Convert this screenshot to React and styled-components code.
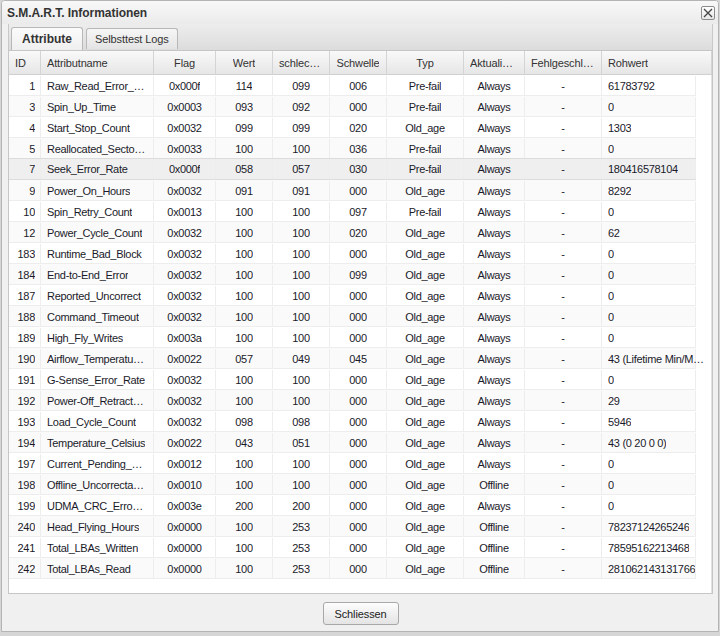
import React from "react";
import styled, { createGlobalStyle } from "styled-components";

const Global = createGlobalStyle`
  html, body { margin: 0; padding: 0; background: #d6d6d6; }
  body { font-family: "Liberation Sans", Arial, sans-serif; font-size: 11px; color: #222; }
  * { box-sizing: border-box; }
`;

const Window = styled.div`
  margin-left: 1px;
  width: 718px;
  height: 632px;
  border: 1px solid #b4b4b4;
  border-radius: 4px 4px 0 0;
  background: #f0f0f0;
  display: flex;
  flex-direction: column;
  overflow: hidden;
`;

const TitleBar = styled.div`
  height: 23px;
  flex: none;
  display: flex;
  align-items: center;
  justify-content: space-between;
  padding: 0 3px 0 5px;
  background: linear-gradient(#f8f8f8, #ebebeb);
`;

const Title = styled.div`
  font-weight: bold;
  font-size: 12px;
  color: #333;
  letter-spacing: -0.05px;
`;

const CloseBtn = styled.div`
  width: 14px;
  height: 14px;
  border: 1px solid #8c8c8c;
  border-radius: 2px;
  background: linear-gradient(#ffffff, #e6e6e6);
  display: flex;
  align-items: center;
  justify-content: center;
`;

const Body = styled.div`
  flex: 1;
  display: flex;
  flex-direction: column;
  padding: 0 5px 0 6px;
`;

const TabStrip = styled.div`
  height: 26px;
  flex: none;
  display: flex;
  align-items: flex-end;
  gap: 3px;
  padding-left: 2px;
  background: linear-gradient(#ededed, #dcdcdc);
  border-left: 1px solid #c8c8c8;
  border-right: 1px solid #c8c8c8;
`;

const Tab = styled.div`
  height: ${(p) => (p.$active ? "23px" : "21px")};
  margin-bottom: ${(p) => (p.$active ? "0" : "1px")};
  padding: 0 ${(p) => (p.$active ? "10px" : "8px")};
  display: flex;
  align-items: center;
  font-size: ${(p) => (p.$active ? "12px" : "11px")};
  font-weight: ${(p) => (p.$active ? "bold" : "normal")};
  letter-spacing: ${(p) => (p.$active ? "0" : "-0.1px")};
  color: #333;
  border: 1px solid #b8b8b8;
  border-bottom: none;
  border-radius: 3px 3px 0 0;
  background: ${(p) =>
    p.$active ? "linear-gradient(#fbfbfb, #efefef)" : "linear-gradient(#f6f6f6, #e4e4e4)"};
`;

const Panel = styled.div`
  height: 544px;
  flex: none;
  border: 1px solid #c6c6c6;
  background: #fff;
  display: flex;
  flex-direction: column;
`;

const cols = [
  { key: "id", w: 32, align: "right", hAlign: "left" },
  { key: "name", w: 113, align: "left", hAlign: "left", padR: 7 },
  { key: "flag", w: 62, align: "center", hAlign: "center" },
  { key: "wert", w: 57, align: "center", hAlign: "center" },
  { key: "schlecht", w: 57, align: "center", hAlign: "center" },
  { key: "schwelle", w: 57, align: "center", hAlign: "center" },
  { key: "typ", w: 77, align: "center", hAlign: "center" },
  { key: "akt", w: 61, align: "center", hAlign: "center" },
  { key: "fehl", w: 77, align: "center", hAlign: "center" },
  { key: "roh", w: 94, align: "left", hAlign: "left", overflow: true },
];

const headers = [
  "ID",
  "Attributname",
  "Flag",
  "Wert",
  "schlechtester",
  "Schwelle",
  "Typ",
  "Aktualisiert",
  "Fehlgeschlagen",
  "Rohwert",
];

const HeaderRow = styled.div`
  display: flex;
  height: 24px;
  flex: none;
  background: linear-gradient(#f9f9f9, #e6e6e6);
  border-bottom: 1px solid #d0d0d0;
`;

const HeaderCell = styled.div`
  width: ${(p) => p.$w}px;
  flex: ${(p) => (p.$grow ? "1" : "none")};
  padding: 0 6px;
  display: flex;
  align-items: center;
  justify-content: ${(p) => (p.$align === "center" ? "center" : "flex-start")};
  border-right: 1px solid #d4d4d4;
  color: #333;
  letter-spacing: -0.15px;
  white-space: nowrap;
  overflow: hidden;
`;

const HeaderText = styled.span`
  overflow: hidden;
  text-overflow: ellipsis;
  white-space: nowrap;
`;

const BodyArea = styled.div`
  flex: 1;
  display: flex;
`;

const Rows = styled.div`
  width: 687px;
  flex: none;
`;

const Gutter = styled.div`
  flex: 1;
  border-right: 1px solid #e2e2e2;
`;

const Row = styled.div`
  display: flex;
  background: ${(p) => (p.$hover ? "#efefef" : p.$alt ? "#fafafa" : "#fff")};
  border-top: 1px solid ${(p) => (p.$hover ? "#dcdcdc" : "transparent")};
  border-bottom: 1px solid ${(p) => (p.$hover ? "#dcdcdc" : "#ededed")};
  margin-top: ${(p) => (p.$hover ? "-1px" : "0")};
  height: ${(p) => (p.$hover ? "22px" : "21px")};
`;

const Cell = styled.div`
  width: ${(p) => p.$w}px;
  flex: none;
  padding-left: ${(p) => (p.$align === "right" ? "0" : "6px")};
  padding-right: ${(p) =>
    p.$overflow ? "0" : p.$padR ? `${p.$padR}px` : p.$align === "right" ? "5px" : "6px"};
  display: flex;
  align-items: center;
  justify-content: ${(p) =>
    p.$align === "center" ? "center" : p.$align === "right" ? "flex-end" : "flex-start"};
  border-right: 1px solid #ededed;
  color: #1a1a2a;
  letter-spacing: -0.3px;
  overflow: ${(p) => (p.$overflow ? "visible" : "hidden")};
`;

const CellText = styled.span`
  overflow: hidden;
  text-overflow: ellipsis;
  white-space: nowrap;
`;

const RohText = styled.span`
  flex: none;
  white-space: nowrap;
  overflow: hidden;
  text-overflow: ellipsis;
  max-width: ${(p) => (p.$long ? "97px" : "none")};
`;

const Footer = styled.div`
  flex: 1;
  display: flex;
  justify-content: center;
  align-items: flex-start;
  padding-top: 8px;
`;

const Button = styled.button`
  width: 76px;
  height: 23px;
  border: 1px solid #a8a8a8;
  border-radius: 3px;
  background: linear-gradient(#fdfdfd, #e4e4e4);
  font-family: "Liberation Sans", Arial, sans-serif;
  font-size: 11px;
  letter-spacing: -0.1px;
  color: #222;
  padding: 0;
`;

const data = [
  ["1", "Raw_Read_Error_Rate", "0x000f", "114", "099", "006", "Pre-fail", "Always", "-", "61783792"],
  ["3", "Spin_Up_Time", "0x0003", "093", "092", "000", "Pre-fail", "Always", "-", "0"],
  ["4", "Start_Stop_Count", "0x0032", "099", "099", "020", "Old_age", "Always", "-", "1303"],
  ["5", "Reallocated_Sector_Ct", "0x0033", "100", "100", "036", "Pre-fail", "Always", "-", "0"],
  ["7", "Seek_Error_Rate", "0x000f", "058", "057", "030", "Pre-fail", "Always", "-", "180416578104"],
  ["9", "Power_On_Hours", "0x0032", "091", "091", "000", "Old_age", "Always", "-", "8292"],
  ["10", "Spin_Retry_Count", "0x0013", "100", "100", "097", "Pre-fail", "Always", "-", "0"],
  ["12", "Power_Cycle_Count", "0x0032", "100", "100", "020", "Old_age", "Always", "-", "62"],
  ["183", "Runtime_Bad_Block", "0x0032", "100", "100", "000", "Old_age", "Always", "-", "0"],
  ["184", "End-to-End_Error", "0x0032", "100", "100", "099", "Old_age", "Always", "-", "0"],
  ["187", "Reported_Uncorrect", "0x0032", "100", "100", "000", "Old_age", "Always", "-", "0"],
  ["188", "Command_Timeout", "0x0032", "100", "100", "000", "Old_age", "Always", "-", "0"],
  ["189", "High_Fly_Writes", "0x003a", "100", "100", "000", "Old_age", "Always", "-", "0"],
  ["190", "Airflow_Temperature_Cel", "0x0022", "057", "049", "045", "Old_age", "Always", "-", "43 (Lifetime Min/Max 20/43)"],
  ["191", "G-Sense_Error_Rate", "0x0032", "100", "100", "000", "Old_age", "Always", "-", "0"],
  ["192", "Power-Off_Retract_Count", "0x0032", "100", "100", "000", "Old_age", "Always", "-", "29"],
  ["193", "Load_Cycle_Count", "0x0032", "098", "098", "000", "Old_age", "Always", "-", "5946"],
  ["194", "Temperature_Celsius", "0x0022", "043", "051", "000", "Old_age", "Always", "-", "43 (0 20 0 0)"],
  ["197", "Current_Pending_Sector", "0x0012", "100", "100", "000", "Old_age", "Always", "-", "0"],
  ["198", "Offline_Uncorrectable", "0x0010", "100", "100", "000", "Old_age", "Offline", "-", "0"],
  ["199", "UDMA_CRC_Error_Count", "0x003e", "200", "200", "000", "Old_age", "Always", "-", "0"],
  ["240", "Head_Flying_Hours", "0x0000", "100", "253", "000", "Old_age", "Offline", "-", "78237124265246"],
  ["241", "Total_LBAs_Written", "0x0000", "100", "253", "000", "Old_age", "Offline", "-", "78595162213468"],
  ["242", "Total_LBAs_Read", "0x0000", "100", "253", "000", "Old_age", "Offline", "-", "281062143131766"],
];

export default function App() {
  return (
    <>
      <Global />
      <Window>
        <TitleBar>
          <Title>S.M.A.R.T. Informationen</Title>
          <CloseBtn>
            <svg width="10" height="10" viewBox="0 0 10 10">
              <path d="M1 1 L9 9 M9 1 L1 9" stroke="#444" strokeWidth="1.3" fill="none" />
            </svg>
          </CloseBtn>
        </TitleBar>
        <Body>
          <TabStrip>
            <Tab $active>Attribute</Tab>
            <Tab>Selbsttest Logs</Tab>
          </TabStrip>
          <Panel>
            <HeaderRow>
              {cols.map((c, i) => (
                <HeaderCell
                  key={c.key}
                  $w={c.w}
                  $align={c.hAlign}
                  $grow={i === cols.length - 1}
                >
                  <HeaderText>{headers[i]}</HeaderText>
                </HeaderCell>
              ))}
            </HeaderRow>
            <BodyArea>
              <Rows>
                {data.map((r, ri) => (
                  <Row key={r[0]} $alt={ri % 2 === 1} $hover={r[0] === "7"}>
                    {cols.map((c, ci) => (
                      <Cell
                        key={c.key}
                        $w={c.w}
                        $align={c.align}
                        $overflow={c.overflow}
                        $padR={c.padR}
                      >
                        {c.overflow ? (
                          <RohText $long={/[^0-9]/.test(r[ci])}>{r[ci]}</RohText>
                        ) : (
                          <CellText>{r[ci]}</CellText>
                        )}
                      </Cell>
                    ))}
                  </Row>
                ))}
              </Rows>
              <Gutter />
            </BodyArea>
          </Panel>
          <Footer>
            <Button>Schliessen</Button>
          </Footer>
        </Body>
      </Window>
    </>
  );
}
